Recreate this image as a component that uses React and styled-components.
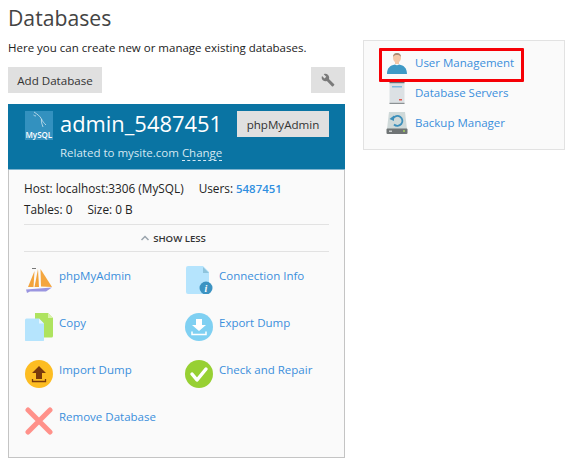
import React from "react";
import styled, { createGlobalStyle } from "styled-components";

const GlobalStyle = createGlobalStyle`
    html, body {
        margin: 0;
        padding: 0;
        background: #ffffff;
    }
    body {
        font-family: "Open Sans", "Liberation Sans", sans-serif;
        font-size: 11.5px;
        color: #333333;
    }
`;

const Page = styled.div`
    width: 570px;
    height: 460px;
    overflow: hidden;
    box-sizing: border-box;
    padding: 0 5px 0 8px;
    display: flex;
    gap: 18px;
`;

const Main = styled.div`
    width: 337px;
    flex-shrink: 0;
`;

const Title = styled.h1`
    margin: 0;
    padding-top: 1px;
    font-size: 21.2px;
    line-height: 33px;
    font-weight: 400;
    color: #444444;
`;

const Intro = styled.p`
    margin: 5px 0 0;
    font-size: 11.5px;
    line-height: 18px;
    color: #222222;
`;

const Toolbar = styled.div`
    display: flex;
    justify-content: space-between;
    margin-top: 10px;
`;

const Button = styled.button`
    border: 0;
    padding: 0;
    width: ${(p) => p.$width}px;
    height: ${(p) => p.$height || 26}px;
    background: #e0e0e0;
    font-family: inherit;
    font-size: 11.6px;
    color: #333333;
    display: flex;
    align-items: center;
    justify-content: center;
`;

const Card = styled.div`
    margin-top: 11px;
    height: 354px;
    box-sizing: border-box;
    background: #fafafa;
    border: 1px solid #c4c4c4;
    border-top: 0;
`;

const CardHeader = styled.div`
    margin: 0 -1px;
    height: 66px;
    box-sizing: border-box;
    background: #0a74a3;
    padding: 7px 16px 0 17px;
    color: #ffffff;
    border-bottom: 1px solid #7fb4cf;
`;

const HeaderTop = styled.div`
    display: flex;
    align-items: flex-start;
`;

const Logo = styled.div`
    width: 28px;
    height: 29px;
    margin-right: 7px;
    flex-shrink: 0;
`;

const DbName = styled.div`
    flex: 1;
    font-size: 21.9px;
    line-height: 26px;
    font-weight: 400;
`;

const Related = styled.div`
    margin: 4px 0 0 35px;
    font-size: 11.5px;
    line-height: 18px;
    color: #d5e8f2;
`;

const Change = styled.span`
    border-bottom: 1px dashed #d5e8f2;
`;

const CardBody = styled.div`
    padding: 8px 15px 0 15px;
`;

const InfoRow = styled.div`
    display: flex;
    gap: ${(p) => p.$gap}px;
    line-height: 21px;
    font-size: 11.8px;
    font-weight: 500;
    color: #222222;
`;

const InfoLink = styled.span`
    color: #2f8fe0;
    font-size: 11.4px;
    font-weight: 600;
`;

const ShowLess = styled.div`
    margin-top: 4px;
    height: 26px;
    padding-right: 7px;
    border-top: 1px solid #e2e2e2;
    border-bottom: 1px solid #e2e2e2;
    display: flex;
    align-items: center;
    justify-content: center;
    gap: 3px;
    font-size: 9.6px;
    font-weight: 600;
    color: #333333;
`;

const Actions = styled.div`
    display: grid;
    grid-template-columns: 160px 1fr;
    grid-auto-rows: 47px;
    margin-top: 14px;
    padding-left: 1px;
`;

const Action = styled.a`
    display: flex;
    align-items: flex-start;
    gap: 6px;
    color: #3a8fdc;
    font-size: 11.5px;
    line-height: 20px;
`;

const IconBox = styled.svg`
    width: ${(p) => p.$size || 28}px;
    height: ${(p) => p.$size || 28}px;
    flex-shrink: 0;
`;

const Side = styled.div`
    width: 202px;
    height: 110px;
    margin-top: 40px;
    box-sizing: border-box;
    background: #fafafa;
    border: 1px solid #e2e2e2;
    padding: 7px 0 0 16px;
`;

const SideLink = styled.a`
    display: flex;
    align-items: center;
    gap: 7px;
    height: 30px;
    padding-left: 6px;
    width: 144px;
    box-sizing: border-box;
    color: #3a8fdc;
    font-size: 11.5px;
    position: relative;
`;

const HighlightBox = styled.span`
    position: absolute;
    left: -1px;
    top: 0;
    width: 145px;
    height: 34px;
    box-sizing: border-box;
    border: 3px solid #f60006;
    border-radius: 1px;
`;

const SideLabel = styled.span`
    position: relative;
    top: -1px;
`;

const Wrench = () => (
    <svg width="14" height="14" viewBox="0 0 24 24">
        <path
            fill="#7a7a7a"
            d="M22.7 19.3 13.6 10.2c.9-2.3.4-5-1.5-6.9C10.1 1.3 7.1.9 4.7 2l4.3 4.3-3 3L1.800 5C.6 7.400 1.100 10.400 3.100 12.400c1.900 1.900 4.600 2.400 6.900 1.500l9.100 9.100c.4.4 1 .4 1.400 0l2.200-2.300c.4-.4.4-1 0-1.400z"
        />
    </svg>
);

const MySqlLogo = () => (
    <Logo>
        <svg width="28" height="29" viewBox="0 0 28 29">
            <rect width="28" height="29" fill="#3391bf" />
            <path
                d="M9 1c3 2 6 4 7.500 7 1 2.500 2.500 4 4.500 6M16.500 8c-.5 3 .5 5 1.500 8M11 5c-1 0-2-.5-2.500-1"
                fill="none"
                stroke="#cfe5f0"
                strokeWidth="0.8"
            />
            <text x="0.5" y="27" fill="#ffffff" fontSize="8" fontWeight="600" fontFamily="Open Sans, sans-serif">
                MySQL
            </text>
        </svg>
    </Logo>
);

const SailIcon = () => (
    <IconBox viewBox="0 0 28 28">
        <path d="M9.500 5 3 21h5.500z" fill="#f2a33c" />
        <path d="M13 3 9.500 21H14z" fill="#f2a33c" />
        <path d="M15.500 3 16 20.500 27 21z" fill="#f4a63f" />
        <path d="M1 23.500 27 21.500 21 25.500H5L2 27z" fill="#9a95e0" />
        <path d="M7 2.500h4" stroke="#777" strokeWidth="1" />
    </IconBox>
);

const InfoIcon = () => (
    <IconBox viewBox="0 0 28 28">
        <path d="M3 0h15l6 6v20a2 2 0 0 1-2 2H3a2 2 0 0 1-2-2V2a2 2 0 0 1 2-2z" fill="#b5e4fd" />
        <path d="M18 1v6h6z" fill="#8fc4dc" />
        <circle cx="21" cy="22" r="6.500" fill="#3c93c2" />
        <text x="21" y="26" textAnchor="middle" fill="#fff" fontSize="10" fontWeight="700" fontStyle="italic" fontFamily="Liberation Serif, serif">
            i
        </text>
    </IconBox>
);

const CopyIcon = () => (
    <IconBox viewBox="0 0 28 28">
        <path d="M10 0h13l5 5v18a1.500 1.500 0 0 1-1.500 1.500H10z" fill="#aee35f" />
        <path d="M23 0v5h5z" fill="#d9f2ac" />
        <path d="M1.500 5.500H14l5 5V27a1.500 1.500 0 0 1-1.500 1.500h-16A1.500 1.500 0 0 1 0 27V7a1.500 1.500 0 0 1 1.500-1.500z" fill="#b5e4fd" />
        <path d="M14 5.500v5h5z" fill="#e4f5ff" />
    </IconBox>
);

const ExportIcon = () => (
    <IconBox viewBox="0 0 28 28">
        <circle cx="14" cy="14" r="14" fill="#7fd0f2" />
        <path d="M11 6h6v6h4l-7 6-7-6h4z" fill="#ffffff" />
        <path d="M7 18.500v3h14v-3" fill="none" stroke="#ffffff" strokeWidth="1.500" />
    </IconBox>
);

const ImportIcon = () => (
    <IconBox viewBox="0 0 28 28">
        <circle cx="14" cy="14" r="14" fill="#fdbd22" />
        <path d="M14 6l7 7h-4v6h-6v-6H7z" fill="#7a3a0c" />
        <path d="M7.500 19v2.500h13V19" fill="none" stroke="#7a3a0c" strokeWidth="1.300" />
    </IconBox>
);

const CheckIcon = () => (
    <IconBox viewBox="0 0 28 28">
        <circle cx="14" cy="14" r="14" fill="#97d033" />
        <path d="M7 14l5 6 9-11" fill="none" stroke="#ffffff" strokeWidth="3.500" strokeLinecap="round" strokeLinejoin="round" />
    </IconBox>
);

const RemoveIcon = () => (
    <IconBox viewBox="0 0 28 28">
        <path d="M3 3l22 22M25 3 3 25" stroke="#ff918a" strokeWidth="5" strokeLinecap="round" />
    </IconBox>
);

const UserIcon = () => (
    <IconBox $size={22} viewBox="0 0 22 22">
        <path d="M11 1c-2.600 0-4 2-4 4.500 0 2 .8 3.500 2 4.500v2h4v-2c1.200-1 2-2.500 2-4.500C15 3 13.600 1 11 1z" fill="#f3c8a8" />
        <path d="M7 5c0-2.600 1.500-4 4-4s4 1.400 4 4c-1-1.500-2-2-4-2S8 3.500 7 5z" fill="#a98a74" />
        <path d="M1 22c0-6 3-8.500 8-9.500 1 1 3 1 4 0 5 1 8 3.500 8 9.500z" fill="#3f9ac6" />
    </IconBox>
);

const ServerIcon = () => (
    <IconBox $size={22} viewBox="0 0 22 22">
        <rect x="3.500" y="0" width="15" height="22" rx="1" fill="#dce1e4" />
        <rect x="3.500" y="0" width="15" height="1.200" fill="#6a7074" />
        <rect x="3.500" y="20.800" width="15" height="1.200" fill="#8b9194" />
        <rect x="6" y="4" width="10" height="1.500" fill="#7cb9dd" />
        <rect x="13" y="17" width="3" height="1.500" fill="#e2574c" />
    </IconBox>
);

const BackupIcon = () => (
    <IconBox $size={22} viewBox="0 0 22 22">
        <path d="M3 0h16l2 17H1z" fill="#cfd9d9" />
        <rect x="0.500" y="16.500" width="21" height="5.500" rx="1" fill="#6f7475" />
        <rect x="3" y="18.500" width="3" height="1.500" fill="#c9cdcd" />
        <circle cx="18" cy="19" r="1" fill="#a4d65e" />
        <path d="M7 6.500a5 5 0 1 1 1 6" fill="none" stroke="#3c8fbb" strokeWidth="1.800" />
        <path d="M3.500 7 8 3.500V9z" fill="#3c8fbb" />
    </IconBox>
);

const actions = [
    { label: "phpMyAdmin", icon: SailIcon },
    { label: "Connection Info", icon: InfoIcon },
    { label: "Copy", icon: CopyIcon },
    { label: "Export Dump", icon: ExportIcon },
    { label: "Import Dump", icon: ImportIcon },
    { label: "Check and Repair", icon: CheckIcon },
    { label: "Remove Database", icon: RemoveIcon },
];

const App = () => {
    return (
        <Page>
            <GlobalStyle />
            <Main>
                <Title>Databases</Title>
                <Intro>Here you can create new or manage existing databases.</Intro>
                <Toolbar>
                    <Button $width={94}>Add Database</Button>
                    <Button $width={34}>
                        <Wrench />
                    </Button>
                </Toolbar>
                <Card>
                    <CardHeader>
                        <HeaderTop>
                            <MySqlLogo />
                            <DbName>admin_5487451</DbName>
                            <Button $width={92} $height={26}>
                                phpMyAdmin
                            </Button>
                        </HeaderTop>
                        <Related>
                            Related to mysite.com <Change>Change</Change>
                        </Related>
                    </CardHeader>
                    <CardBody>
                        <InfoRow $gap={15}>
                            <span>Host: localhost:3306 (MySQL)</span>
                            <span>
                                Users: <InfoLink>5487451</InfoLink>
                            </span>
                        </InfoRow>
                        <InfoRow $gap={15}>
                            <span>Tables: 0</span>
                            <span>Size: 0 B</span>
                        </InfoRow>
                        <ShowLess>
                            <svg width="10" height="6" viewBox="0 0 10 6">
                                <path d="M1.500 5 5 1.500 8.500 5" fill="none" stroke="#9aa4ad" strokeWidth="1.500" />
                            </svg>
                            SHOW LESS
                        </ShowLess>
                        <Actions>
                            {actions.map((item) => (
                                <Action key={item.label}>
                                    <item.icon />
                                    {item.label}
                                </Action>
                            ))}
                        </Actions>
                    </CardBody>
                </Card>
            </Main>
            <Side>
                <SideLink>
                    <HighlightBox />
                    <UserIcon />
                    <SideLabel>User Management</SideLabel>
                </SideLink>
                <SideLink>
                    <ServerIcon />
                    <SideLabel>Database Servers</SideLabel>
                </SideLink>
                <SideLink>
                    <BackupIcon />
                    <SideLabel>Backup Manager</SideLabel>
                </SideLink>
            </Side>
        </Page>
    );
};

export default App;
